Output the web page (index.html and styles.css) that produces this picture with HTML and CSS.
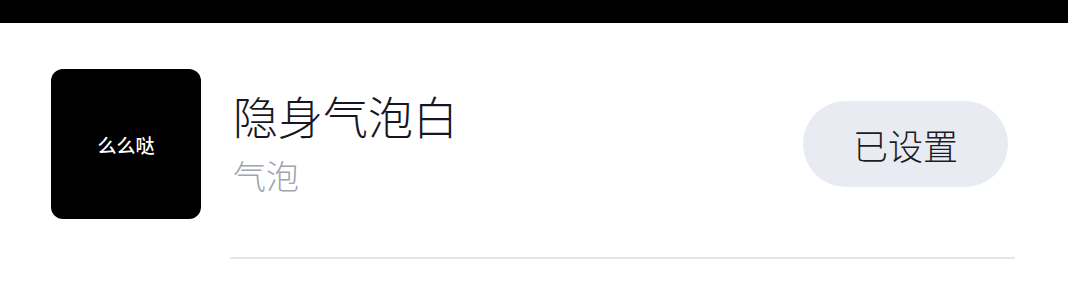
FILE: index.html
```html
<!DOCTYPE html>
<html lang="zh">
<head>
<meta charset="utf-8">
<link rel="stylesheet" href="styles.css">
</head>
<body>
<div class="topbar"></div>
<div class="item">
  <div class="avatar">么么哒</div>
  <div class="info">
    <div class="title">隐身气泡白</div>
    <div class="sub">气泡</div>
  </div>
  <button class="btn">已设置</button>
</div>
<div class="divider"></div>
</body>
</html>
```
FILE: styles.css
```css
html, body {
  margin: 0;
  padding: 0;
  background: #ffffff;
  font-family: "Noto Sans CJK SC", "Noto Sans", sans-serif;
}
.topbar {
  height: 23px;
  background: #000000;
}
.item {
  display: flex;
  align-items: center;
  margin-top: 46px;
  padding: 0 60px 0 51px;
  height: 150px;
}
.avatar {
  width: 150px;
  height: 150px;
  flex: none;
  background: #000;
  border-radius: 12px;
  color: #fff;
  font-size: 19px;
  font-weight: 500;
  display: flex;
  align-items: center;
  justify-content: center;
}
.info {
  flex: 1;
  margin-left: 32px;
  padding-bottom: 4px;
  display: flex;
  flex-direction: column;
}
.title {
  font-size: 45px;
  font-weight: 300;
  color: #151823;
  line-height: 52px;
}
.sub {
  font-size: 33px;
  font-weight: 300;
  color: #a2a5b1;
  line-height: 40px;
  margin-top: 13px;
}
.btn {
  width: 205px;
  height: 86px;
  border: none;
  border-radius: 43px;
  background: #e9ebf2;
  color: #1c1d22;
  font-family: inherit;
  font-size: 35px;
  font-weight: 300;
  padding: 0;
  flex: none;
}
.divider {
  height: 2px;
  background: #e6e6e6;
  margin: 38px 53px 0 230px;
}
```
